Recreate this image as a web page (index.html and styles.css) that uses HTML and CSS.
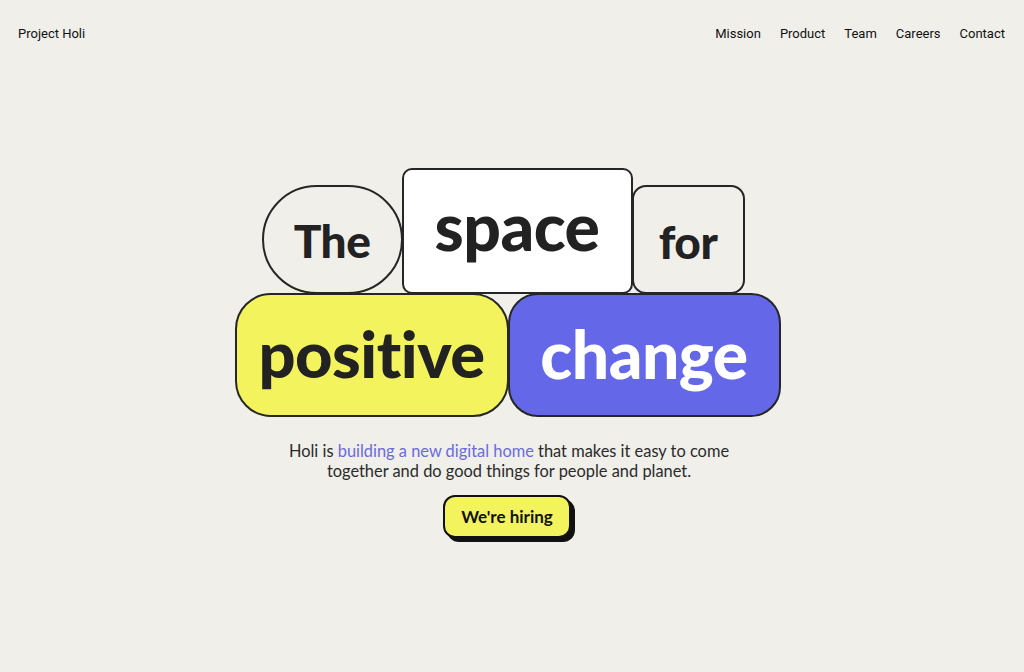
FILE: index.html
```html
<!DOCTYPE html>
<html lang="en">
<head>
<meta charset="utf-8">
<title>Project Holi</title>
<link rel="stylesheet" href="styles.css">
</head>
<body>
<header class="header">
  <a class="brand" href="#">Project Holi</a>
  <nav class="nav">
    <a href="#">Mission</a>
    <a href="#">Product</a>
    <a href="#">Team</a>
    <a href="#">Careers</a>
    <a href="#">Contact</a>
  </nav>
</header>
<main class="main">
  <div class="hero">
    <div class="row row-top">
      <div class="word w-the">The</div>
      <div class="word w-space">space</div>
      <div class="word w-for">for</div>
    </div>
    <div class="row row-bottom">
      <div class="word w-positive">positive</div>
      <div class="word w-change">change</div>
    </div>
  </div>
  <p class="intro">Holi is <a href="#">building a new digital home</a> that makes it easy to come<br>together and do good things for people and planet.</p>
  <a class="cta" href="#">We're hiring</a>
</main>
</body>
</html>
```

FILE: styles.css
```css
* { box-sizing: border-box; }
html, body { margin: 0; padding: 0; }
body {
  background: #f0efea;
  color: #222;
  font-family: "Lato", "Inter", sans-serif;
  width: 1024px;
  height: 672px;
  overflow: hidden;
}
a { color: inherit; text-decoration: none; }

.header {
  display: flex;
  justify-content: space-between;
  align-items: center;
  height: 67px;
  padding: 0 19px 0 18px;
  font-family: "Roboto", "Inter", sans-serif;
  font-size: 13px;
  color: #111;
}
.nav { display: flex; gap: 19px; }

.main {
  display: flex;
  flex-direction: column;
  align-items: center;
  padding-top: 101px;
}
.hero {
  display: flex;
  flex-direction: column;
  align-items: flex-start;
  margin-right: 9px;
}
.row { display: flex; align-items: flex-end; }
.row-top { margin-left: 27px; }

.word {
  display: flex;
  align-items: center;
  justify-content: center;
  border: 2px solid #262626;
  font-weight: 900;
  letter-spacing: -0.5px;
  color: #222;
}
.row-bottom .word { margin-top: -1px; }
.w-the {
  width: 141px; height: 109px;
  border-radius: 56px;
  font-size: 46px;
  padding-top: 2px;
}
.w-space {
  width: 231px; height: 126px;
  border-radius: 10px;
  background: #fff;
  font-size: 66px;
  padding-bottom: 12px;
  margin: 0 -1px;
}
.w-for {
  width: 113px; height: 109px;
  border-radius: 14px;
  font-size: 46px;
  padding-top: 4px;
}
.w-positive {
  width: 274px; height: 124px;
  border-radius: 36px;
  background: #f3f35e;
  font-size: 65px;
  padding-bottom: 4px;
}
.w-change {
  width: 273px; height: 124px;
  border-radius: 30px;
  background: #6367e8;
  color: #fff;
  font-size: 66px;
  padding-bottom: 4px;
  margin-left: -1px;
}

.intro {
  margin: 24px 0 0 -6px;
  text-align: center;
  font-size: 16.4px;
  line-height: 20px;
  color: #2a2a2a;
}
.intro a { color: #6b6bd8; }

.cta {
  margin: 14px 0 0 -10px;
  display: inline-flex;
  align-items: center;
  justify-content: center;
  width: 128px;
  height: 43px;
  background: #f3f35e;
  border: 2px solid #111;
  border-radius: 12px;
  box-shadow: 4px 4px 0 #111;
  font-weight: 700;
  font-size: 17px;
  color: #111;
}
```
